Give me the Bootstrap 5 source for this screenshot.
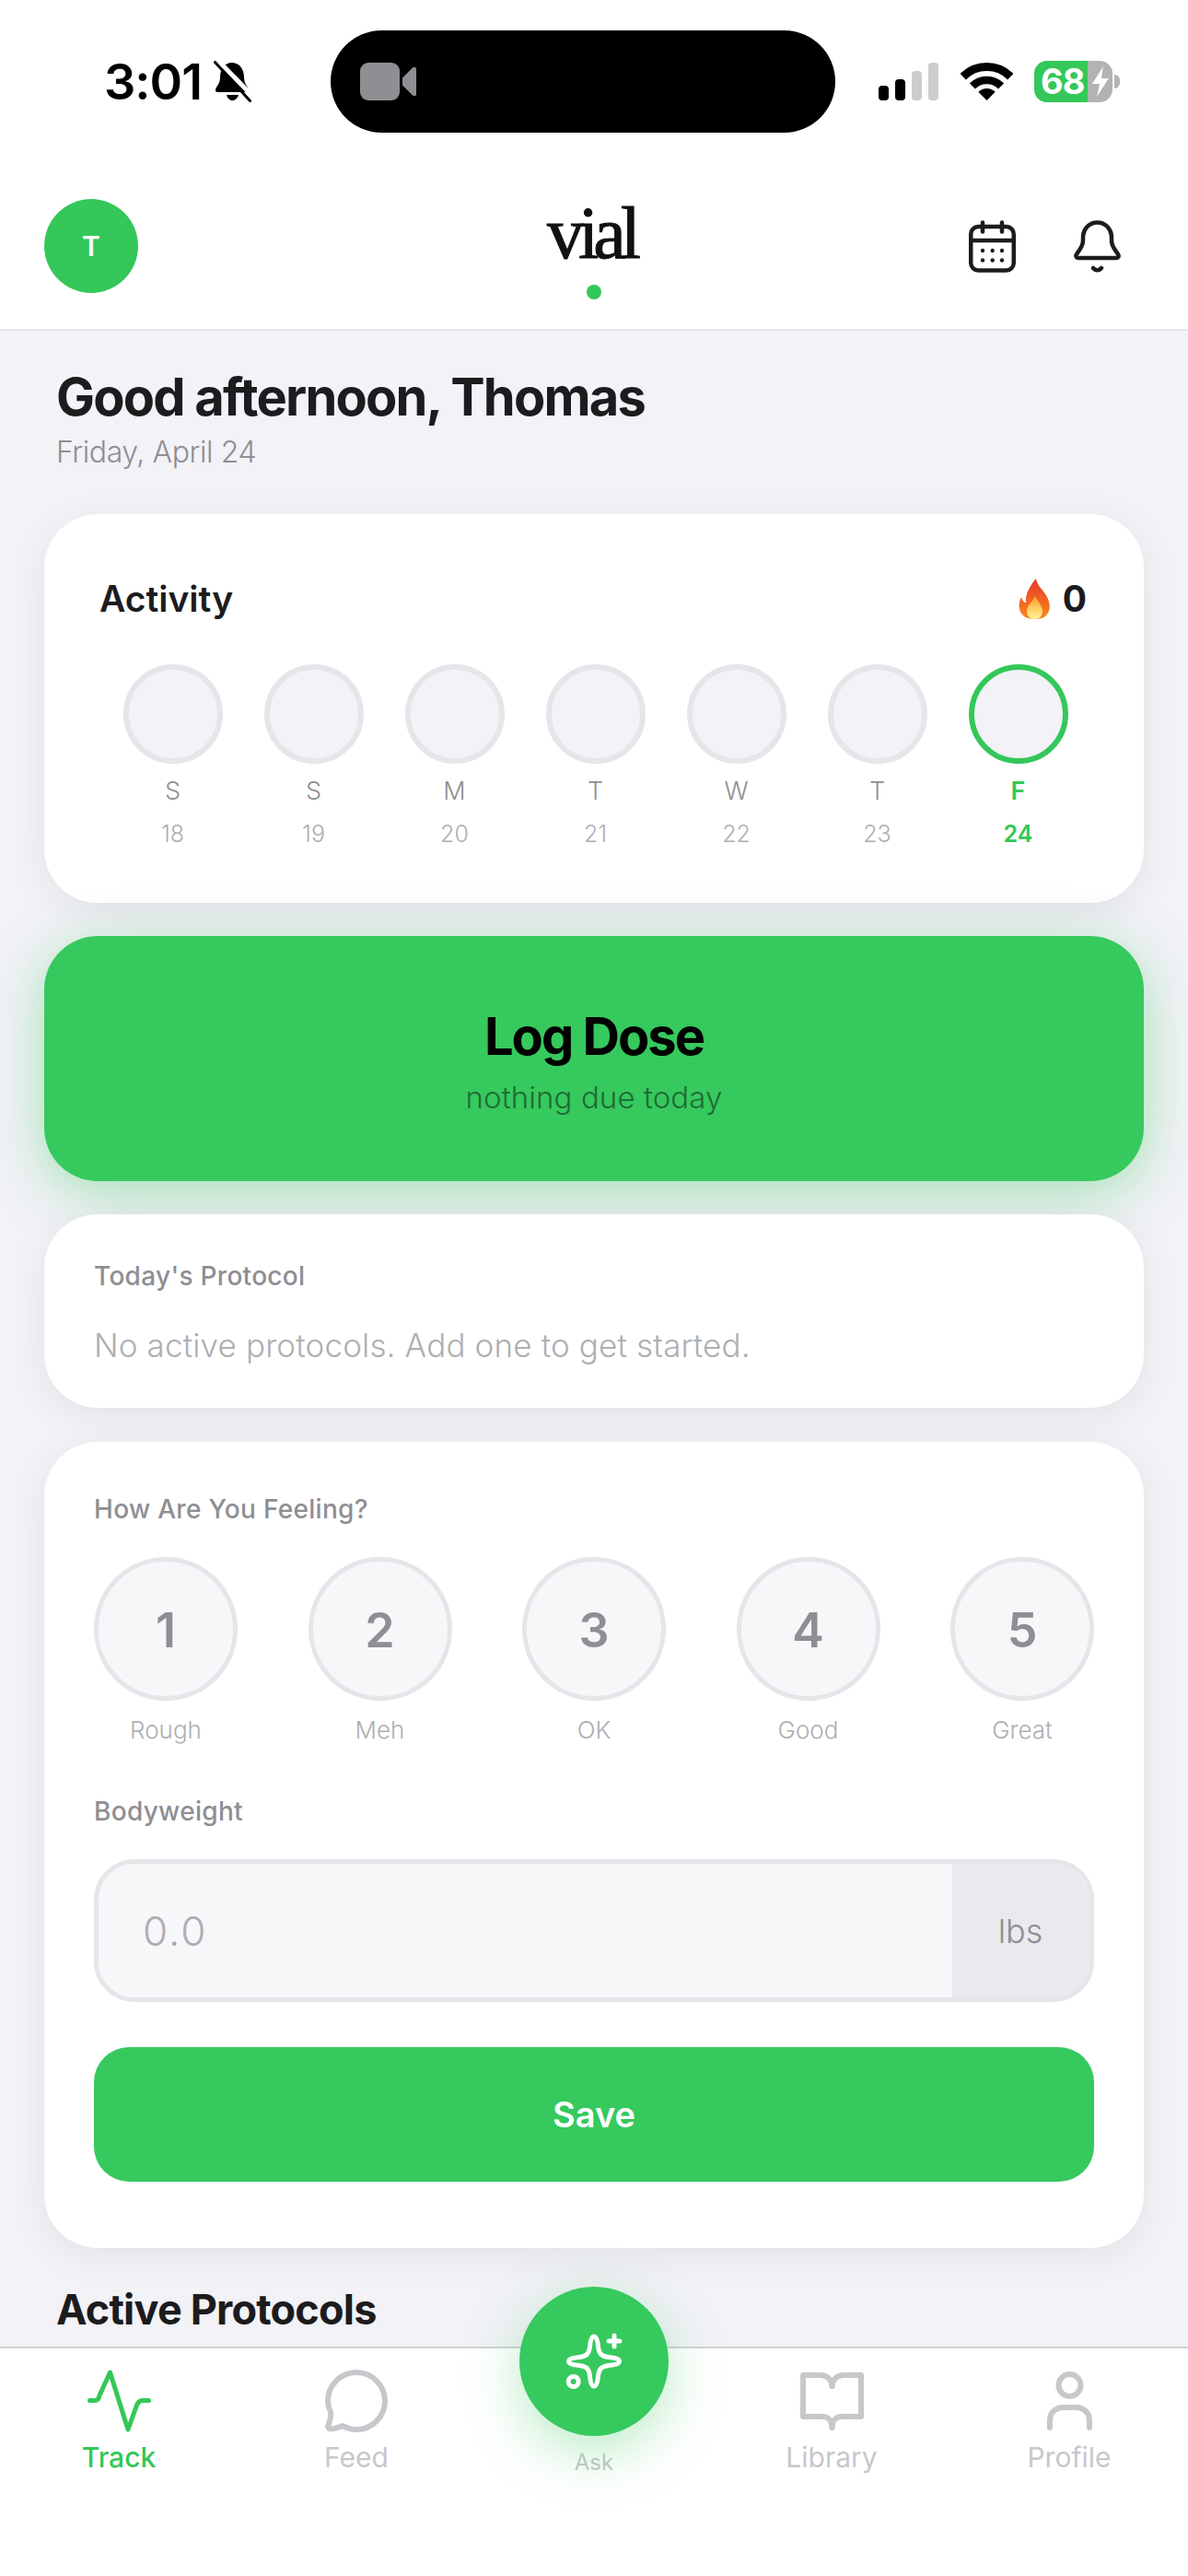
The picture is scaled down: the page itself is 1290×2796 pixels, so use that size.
<!DOCTYPE html>
<html lang="en">
<head>
    <meta charset="UTF-8">
    <meta name="viewport" content="width=device-width, initial-scale=1.0">
    <title>Vial - Track</title>
    <link href="https://cdn.jsdelivr.net/npm/bootstrap@5.3.3/dist/css/bootstrap.min.css" rel="stylesheet">
    <script src="https://cdn.jsdelivr.net/npm/bootstrap@5.3.3/dist/js/bootstrap.bundle.min.js"></script>
    <style>
        body {
            background-color: #f2f2f7;
            font-family: Inter, "Liberation Sans", sans-serif;
            color: #1c1c1e;
        }
        .app-screen { height: 2796px; }

        /* status bar */
        .status-row { height: 178px; padding-top: 33px; background: #fff; }
        .status-left { width: 359px; height: 111px; padding-left: 113px; gap: 13px; }
        .status-time { font-size: 54px; font-weight: 600; line-height: 1; letter-spacing: -1px; color: #000; }
        .island { width: 548px; height: 111px; border-radius: 56px; background: #000; padding-left: 32px; }
        .status-right { height: 111px; padding-left: 47px; }
        .battery-body { width: 85px; height: 45px; border-radius: 14px; overflow: hidden; margin-left: 23px; }
        .battery-level { width: 58px; background: #34c759; color: #fff; font-size: 38px; font-weight: 700; line-height: 45px; padding-left: 7px; letter-spacing: -1px; }
        .battery-rest { width: 27px; background: #b3b3b3; }
        .battery-nub { width: 6px; height: 15px; background: #b3b3b3; border-radius: 0 6px 6px 0; margin-left: 2px; }

        /* header */
        .top-bar { background: #fff; height: 181px; padding: 38px 48px 0; border-bottom: 2px solid #e5e5ea; align-items: flex-start; flex-wrap: nowrap; }
        .top-side { flex: 1 1 0; }
        .user-avatar { width: 102px; height: 102px; border-radius: 50%; background: #34c759; color: #fff; font-size: 30px; font-weight: 600; }
        .brand-word { font-family: "Liberation Serif", serif; font-size: 80px; line-height: 72px; letter-spacing: -6px; color: #111; padding-right: 6px; margin-top: 1px; -webkit-text-stroke: 1px #111; }
        .brand-dot { width: 16px; height: 16px; border-radius: 50%; background: #34c759; margin-top: 20px; }
        .top-icons { gap: 63px; padding-top: 23px; }
        .top-icons svg:last-child { margin-right: 25px; }

        /* main column */
        .main-scroll { padding: 40px 48px 0; overflow: hidden; min-height: 0; }
        .hello-title { font-size: 56px; line-height: 64px; font-weight: 700; letter-spacing: -1.8px; margin: 0 0 8px 13px; color: #1c1c1e; }
        .hello-date { font-size: 32px; line-height: 40px; font-weight: 300; color: #8e8e93; margin: 0 0 47px 13px; letter-spacing: -.4px; }
        .panel { border: 0; border-radius: 58px; background: #fff; box-shadow: 0 8px 40px rgba(0, 0, 0, .07); }
        .activity-panel { padding: 69px 60px 60px; margin-bottom: 36px; }
        .activity-head { line-height: 46px; font-size: 39px; font-weight: 600; letter-spacing: 0; margin-bottom: 48px; }
        .streak-count { font-weight: 700; gap: 12px; padding-right: 2px; }
        .week-row { padding-left: 3px; }
        .day-col { width: 153px; text-align: center; }
        .day-ring { width: 108px; height: 108px; border-radius: 50%; background: #f2f2f7; border: 6px solid #e5e5ea; margin: 0 auto 14px; }
        .day-name { font-size: 27px; line-height: 32px; font-weight: 300; color: #8e8e93; margin-bottom: 15px; }
        .day-num { font-size: 25px; line-height: 30px; font-weight: 300; color: #aeaeb2; }
        .day-now .day-ring { border-color: #34c759; }
        .day-now .day-name, .day-now .day-num { color: #34c759; font-weight: 600; }

        .dose-btn { position: relative; display: block; width: 100%; border: 0; border-radius: 58px; background: #36c95e; padding: 77px 0 71px; margin-bottom: 36px; box-shadow: 0 12px 60px rgba(52, 199, 89, .42); }
        .dose-btn:hover { background: #36c95e; }
        .dose-title { font-size: 56px; line-height: 64px; font-weight: 700; letter-spacing: -2px; color: #000; margin-bottom: 14px; }
        .dose-sub { font-size: 33px; line-height: 40px; font-weight: 300; color: #1f6b34; letter-spacing: .1px; }

        .protocol-panel { padding: 50px 54px 47px; margin-bottom: 37px; }
        .field-label { font-size: 28px; line-height: 34px; font-weight: 500; letter-spacing: .3px; color: #8e8e93; }
        .empty-note { font-size: 35px; line-height: 42px; font-weight: 300; color: #aeaeb2; margin-top: 37px; letter-spacing: .15px; }

        .feeling-panel { padding: 56px 54px 72px; margin-bottom: 41px; }
        .mood-row { margin: 35px 0 55px; }
        .mood-col { width: 156px; text-align: center; }
        .mood-ring { width: 156px; height: 156px; border-radius: 50%; background: #f7f7fa; border: 5px solid #e5e5ea; color: #8e8e93; font-size: 52px; font-weight: 600; padding-top: 3px; margin-bottom: 16px; }
        .mood-name { font-size: 26px; line-height: 32px; font-weight: 300; color: #aeaeb2; }
        .weight-group { margin-top: 35px; height: 155px; border: 5px solid #e5e5ea; border-radius: 44px; overflow: hidden; flex-wrap: nowrap; }
        .weight-group .form-control { border: 0; border-radius: 0; background: #f7f7fa; padding: 0 0 0 48px; font-size: 44px; font-weight: 300; letter-spacing: 2px; box-shadow: none; }
        .weight-group .form-control::placeholder { color: #aeaeb2; }
        .weight-group .input-group-text { width: 150px; border: 0; border-radius: 0; background: #e9e9ee; color: #8e8e93; font-size: 36px; font-weight: 300; justify-content: center; }
        .save-btn { display: block; width: 100%; height: 146px; margin-top: 49px; border: 0; border-radius: 38px; background: #36c95e; color: #fff; font-size: 38px; font-weight: 600; }
        .save-btn:hover { background: #36c95e; color: #fff; }
        .section-title { font-size: 45px; line-height: 52px; font-weight: 700; letter-spacing: -.8px; margin: 0 0 0 13px; color: #1c1c1e; }

        /* bottom tabs */
        .tab-strip { position: relative; height: 249px; flex: 0 0 249px; background: #fff; border-top: 2px solid #d1d1d6; padding-top: 23px; }
        .tab-item { flex: 1 1 0; text-align: center; color: #c7c7cc; font-size: 30px; line-height: 36px; font-weight: 400; text-decoration: none; }
        .tab-item svg { display: block; margin: 0 auto; }
        .tab-icon-slot { height: 68px; margin-bottom: 9px; }
        .tab-active { color: #34c759; font-weight: 500; }
        .tab-ask { font-size: 24px; line-height: 30px; padding-top: 86px; }
        .ask-fab { position: absolute; left: 50%; top: -67px; width: 162px; height: 162px; margin-left: -81px; border-radius: 50%; background: #36c95e; box-shadow: 0 16px 60px rgba(52, 199, 89, .35); }
        .ask-fab:hover { background: #36c95e; }
        .ask-fab svg { overflow: visible; }
    </style>
</head>
<body>

    <div class="app-screen d-flex flex-column">

        <div class="status-row d-flex align-items-start">
            <div class="status-left d-flex align-items-center">
                <span class="status-time">3:01</span>
                <svg width="41" height="45" viewBox="0 0 41 45">
                    <path d="M20 2C28 2 33 9 33 18C33 26 38 28 38 32C38 33.500 37 34 35 34H5C3 34 2 33.500 2 32C2 28 7 26 7 18C7 9 12 2 20 2Z" fill="#000"/>
                    <path d="M14 37H27C26 41 23 43 20.500 43C18 43 15 41 14 37Z" fill="#000"/>
                    <path d="M5 0L45 41" stroke="#fff" stroke-width="5"/>
                    <path d="M1.500 1.500L39.500 43.500" stroke="#000" stroke-width="3" stroke-linecap="round"/>
                </svg>
            </div>
            <div class="island d-flex align-items-center">
                <svg width="61" height="41" viewBox="0 0 61 41">
                    <rect width="43" height="41" rx="9" fill="#8e8e93"/>
                    <path d="M46 16.500L57 5.500C59 4 61 4.500 61 7.500V33.500C61 36.500 59 37 57 35.500L46 24.500Z" fill="#8e8e93"/>
                </svg>
            </div>
            <div class="status-right d-flex align-items-center">
                <svg width="65" height="41" viewBox="0 0 65 41">
                    <rect x="0" y="25" width="11" height="16" rx="4" fill="#000"/>
                    <rect x="18" y="18" width="11" height="23" rx="4" fill="#000"/>
                    <rect x="36" y="9" width="11" height="32" rx="4" fill="#cdcdcd"/>
                    <rect x="54" y="0" width="11" height="41" rx="4" fill="#cdcdcd"/>
                </svg>
                <svg class="ms-4" width="57" height="42" viewBox="0 0 57 42">
                    <path d="M2.700 15.200A36.500 36.500 0 0 1 54.300 15.200" fill="none" stroke="#000" stroke-width="9"/>
                    <path d="M12.900 25.400A22 22 0 0 1 44.100 25.400" fill="none" stroke="#000" stroke-width="8.500"/>
                    <path d="M28.500 41L19.300 31.800A13 13 0 0 1 37.700 31.800Z" fill="#000"/>
                </svg>
                <div class="battery-body d-flex">
                    <div class="battery-level">68</div>
                    <div class="battery-rest d-flex align-items-center justify-content-center">
                        <svg width="20" height="33" viewBox="0 0 20 33"><path d="M13 0L1 19H9L6 33L19 13H11Z" fill="#fff"/></svg>
                    </div>
                </div>
                <div class="battery-nub"></div>
            </div>
        </div>

        <nav class="navbar top-bar">
            <div class="top-side">
                <div class="user-avatar d-flex align-items-center justify-content-center">T</div>
            </div>
            <div class="d-flex flex-column align-items-center">
                <div class="brand-word">vial</div>
                <div class="brand-dot"></div>
            </div>
            <div class="top-side top-icons d-flex justify-content-end">
                <svg width="51" height="57" viewBox="0 0 51 57" fill="none" stroke="#1c1c1e" stroke-width="4.500" stroke-linecap="round">
                    <rect x="2.250" y="7" width="46.500" height="47.500" rx="8"/>
                    <path d="M2.250 22H48.750M15 2.500V12.500M36 2.500V12.500"/>
                    <g fill="#1c1c1e" stroke="none">
                        <circle cx="15" cy="33" r="2.200"/><circle cx="25.700" cy="33" r="2.200"/><circle cx="36" cy="33" r="2.200"/>
                        <circle cx="15" cy="43.500" r="2.200"/><circle cx="25.700" cy="43.500" r="2.200"/><circle cx="36" cy="43.500" r="2.200"/>
                    </g>
                </svg>
                <svg width="51" height="57" viewBox="0 0 51 57" fill="none" stroke="#1c1c1e" stroke-width="4.500" stroke-linecap="round" stroke-linejoin="round">
                    <path d="M5 41C3 41 1.500 39 3 37C6 32 10 29 10 22V19C10 9 17 2.500 25.500 2.500C34 2.500 41 9 41 19V22C41 29 45 32 48 37C49.500 39 48 41 46 41Z"/>
                    <path d="M21 52C23.500 55 27.500 55 30 52"/>
                </svg>
            </div>
        </nav>

        <main class="main-scroll flex-grow-1">
            <h1 class="hello-title">Good afternoon, Thomas</h1>
            <p class="hello-date">Friday, April 24</p>

            <div class="card panel activity-panel">
                <div class="activity-head d-flex justify-content-between align-items-center">
                    <span>Activity</span>
                    <span class="streak-count d-flex align-items-center">
                        <svg width="37" height="45" viewBox="0 0 37 45">
                            <defs>
                                <linearGradient id="flameOuter" x1="0" y1="0" x2="0" y2="1">
                                    <stop offset="0" stop-color="#e5382a"/><stop offset="1" stop-color="#f98a1d"/>
                                </linearGradient>
                                <linearGradient id="flameInner" x1="0" y1="0" x2="0" y2="1">
                                    <stop offset="0" stop-color="#fb9a1e"/><stop offset="1" stop-color="#fff59a"/>
                                </linearGradient>
                            </defs>
                            <path d="M20 0C21 8 28 12 32 20C36 28 36 36 30 41C26 45 12 45 7 41C1 36 0 28 4 20C5 24 7 26 9 26C8 18 13 8 20 0Z" fill="url(#flameOuter)"/>
                            <path d="M19 18C20 24 27 28 27 35C27 41 23 44 18.500 44C14 44 10 41 10 35C10 29 16 26 19 18Z" fill="url(#flameInner)"/>
                        </svg>
                        0
                    </span>
                </div>
                <div class="week-row d-flex" id="week-row"></div>
            </div>

            <button type="button" class="btn dose-btn">
                <div class="dose-title">Log Dose</div>
                <div class="dose-sub">nothing due today</div>
            </button>

            <div class="card panel protocol-panel">
                <div class="field-label">Today's Protocol</div>
                <div class="empty-note">No active protocols. Add one to get started.</div>
            </div>

            <div class="card panel feeling-panel">
                <div class="field-label">How Are You Feeling?</div>
                <div class="mood-row d-flex justify-content-between" id="mood-row"></div>
                <div class="field-label">Bodyweight</div>
                <div class="input-group weight-group">
                    <input type="text" class="form-control" placeholder="0.0" aria-label="Bodyweight">
                    <span class="input-group-text">lbs</span>
                </div>
                <button type="button" class="btn save-btn">Save</button>
            </div>

            <h2 class="section-title">Active Protocols</h2>
        </main>

        <nav class="tab-strip nav flex-nowrap align-items-start">
            <a class="tab-item tab-active" href="#">
                <div class="tab-icon-slot">
                    <svg width="69" height="68" viewBox="0 0 69 68" fill="none" stroke="#34c759" stroke-width="5" stroke-linecap="round" stroke-linejoin="round">
                        <path d="M2.500 33.500H8Q12 33.500 13 28L24.500 3L44 65L53 40Q55 33.500 60 33.500H66.500"/>
                    </svg>
                </div>
                Track
            </a>
            <a class="tab-item" href="#">
                <div class="tab-icon-slot">
                    <svg width="68" height="68" viewBox="0 0 68 68" fill="none" stroke="#c7c7cc" stroke-width="6" stroke-linejoin="round">
                        <path d="M34 3C51 3 65 17 65 34C65 51 51 65 34 65C28 65 23 63 19 61C14 63 9 65 5 64C3 63.500 3 62 3.500 60C5 56 7 52 6 46C4 42 3 38 3 34C3 17 17 3 34 3Z"/>
                    </svg>
                </div>
                Feed
            </a>
            <div class="tab-item tab-ask">Ask</div>
            <a class="tab-item" href="#">
                <div class="tab-icon-slot">
                    <svg width="69" height="68" viewBox="0 0 69 68" fill="none" stroke="#c7c7cc" stroke-width="6" stroke-linecap="round" stroke-linejoin="round">
                        <path d="M34.500 18C34.500 11 29 6 22 6H3V51H24C30 51 34.500 55 34.500 63"/>
                        <path d="M34.500 18C34.500 11 40 6 47 6H66V51H45C39 51 34.500 55 34.500 63"/>
                    </svg>
                </div>
                Library
            </a>
            <a class="tab-item" href="#">
                <div class="tab-icon-slot">
                    <svg width="49" height="68" viewBox="0 0 49 68" fill="none" stroke="#c7c7cc" stroke-width="6" stroke-linecap="round">
                        <circle cx="24.500" cy="17" r="12"/>
                        <path d="M3 63V55C3 46 10 41 18 41H31C39 41 46 46 46 55V63"/>
                    </svg>
                </div>
                Profile
            </a>
            <button type="button" class="btn ask-fab d-flex align-items-center justify-content-center p-0" aria-label="Ask">
                <svg width="60" height="60" viewBox="0 0 60 60" fill="none" stroke="#fff" stroke-width="5" stroke-linecap="round" stroke-linejoin="round">
                    <path d="M30 3C33 3 34 8 34.500 14C35.500 22 38 24.500 46 25.500C52 26.300 57.500 27 57.500 30C57.500 33 52 33.700 46 34.500C38 35.500 35.500 38 34.500 46C34 52 33 57 30 57C27 57 26 52 25.500 46C24.500 38 22 35.500 14 34.500C8 33.700 2.500 33 2.500 30C2.500 27 8 26.300 14 25.500C22 24.500 24.500 22 25.500 14C26 8 27 3 30 3Z"/>
                    <path d="M52 2V14M46 8H58"/>
                    <circle cx="7.700" cy="52" r="5.500"/>
                </svg>
            </button>
        </nav>
    </div>

    <script>
        const days = [
            ['S', 18], ['S', 19], ['M', 20], ['T', 21], ['W', 22], ['T', 23], ['F', 24]
        ];
        const moods = [
            [1, 'Rough'], [2, 'Meh'], [3, 'OK'], [4, 'Good'], [5, 'Great']
        ];

        document.getElementById('week-row').innerHTML = days.map((d, i) => `
            <div class="day-col ${i === 6 ? 'day-now' : ''}">
                <div class="day-ring"></div>
                <div class="day-name">${d[0]}</div>
                <div class="day-num">${d[1]}</div>
            </div>`).join('');

        document.getElementById('mood-row').innerHTML = moods.map(m => `
            <div class="mood-col">
                <div class="mood-ring d-flex align-items-center justify-content-center">${m[0]}</div>
                <div class="mood-name">${m[1]}</div>
            </div>`).join('');
    </script>

</body>
</html>
